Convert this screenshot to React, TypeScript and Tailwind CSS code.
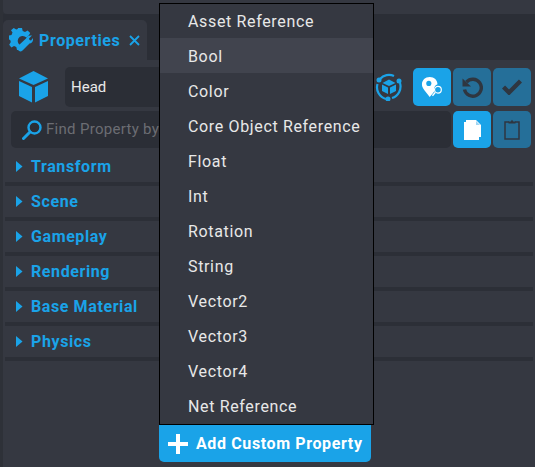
const menuItems = ['Asset Reference', 'Bool', 'Color', 'Core Object Reference', 'Float', 'Int', 'Rotation', 'String', 'Vector2', 'Vector3', 'Vector4', 'Net Reference'];
const sections = ['Transform', 'Scene', 'Gameplay', 'Rendering', 'Base Material', 'Physics'];

const GearIcon = () => (
    <svg width="24" height="25" viewBox="0 0 24 25" className="shrink-0">
        <path d="M9 0h4l.7 3 2.300 1 2.600-1.600 2.600 2.700-1.500 2.300-2.300 2.200a5 5 0 1 0-4.200 8.300l-1.400 1.300-.5 2.800H8l-.7-3-2.300-1-2.600 1.600L.2 16.700 1.800 14 1.200 12 0 11.500V7.500l2.500-.6 1-2.300L2 2.300 4.700 0l2.600 1.500 1.400-.6z" fill="#1aa3e8" />
        <path d="M9.500 17.500 17 10.500c1-2.500 3-3.500 6-3l-3 3 .5 1.500 1.500.5 2-2.500c.5 3-1 5-3.500 5.500L13.500 22.500a2.500 2.500 0 0 1-4-5z" fill="#1aa3e8" />
    </svg>
);

const CubeIcon = () => (
    <svg width="30" height="32" viewBox="0 0 30 32" className="shrink-0">
        <path d="M14.500 0 29 7.500 14.500 14 0 7.500z" fill="#1aa3e8" />
        <path d="M0 10 13 16v15.500L0 25z" fill="#1aa3e8" />
        <path d="M29 10 16 16v15.500L29 25z" fill="#1aa3e8" />
    </svg>
);

const SearchIcon = () => (
    <svg width="20" height="20" viewBox="0 0 20 20" className="shrink-0">
        <circle cx="12.500" cy="7.500" r="6" fill="none" stroke="#1aa3e8" strokeWidth="2.400" />
        <path d="M8 12 1.500 18.500" stroke="#1aa3e8" strokeWidth="3" strokeLinecap="round" />
    </svg>
);

const OrbitIcon = () => (
    <svg width="28" height="28" viewBox="0 0 28 28" className="shrink-0">
        <path d="M5 6a12 12 0 0 1 14-3M25 10a12 12 0 0 1-8 15M11 26A12 12 0 0 1 2.500 11" fill="none" stroke="#1aa3e8" strokeWidth="2.200" />
        <circle cx="4" cy="7" r="2.500" fill="#1aa3e8" />
        <circle cx="24" cy="8" r="2.500" fill="#1aa3e8" />
        <circle cx="13" cy="26" r="2.500" fill="#1aa3e8" />
        <path d="M14 6.500 20.500 10 14 13 7.500 10z" fill="#1aa3e8" />
        <path d="M7 11.500 13 14.500V21L7 18zM21 11.500 15 14.500V21L21 18z" fill="#1aa3e8" />
    </svg>
);

const PinIcon = () => (
    <svg width="22" height="21" viewBox="0 0 24 23">
        <path d="M9.500 0C4.500 0 1 3.500 1 8c0 3 1 4.500 8.500 14 2-2.500 3.500-4.500 5-6.500a6 6 0 0 1 3.500-7.500C18 3.500 14.500 0 9.500 0z" fill="white" />
        <circle cx="8.500" cy="7" r="2.800" fill="#1aa3e8" />
        <circle cx="18.500" cy="14" r="3.700" fill="none" stroke="white" strokeWidth="1.300" />
        <path d="M15.500 17 12.500 20.500" stroke="white" strokeWidth="1.500" />
    </svg>
);

const UndoIcon = () => (
    <svg width="22" height="22" viewBox="0 0 22 22">
        <path d="M5.500 6a8.500 8.500 0 1 1-2 7.500" fill="none" stroke="#2f3640" strokeWidth="3.400" />
        <path d="M1.500 2.500 10 10.500H1.500z" fill="#2f3640" />
    </svg>
);

const CheckIcon = () => (
    <svg width="20" height="16" viewBox="0 0 20 16">
        <path d="M1.500 8 7 13.500 18.500 2" fill="none" stroke="#2f3640" strokeWidth="4.400" />
    </svg>
);

const CopyIcon = () => (
    <svg width="17" height="20" viewBox="0 0 17 20">
        <path d="M0 2h2v15h13v3H0z" fill="white" />
        <path d="M2 0h10l5 5v12H2z" fill="white" />
        <path d="M12 1v4h4z" fill="#9fd6f3" />
    </svg>
);

const ClipboardIcon = () => (
    <svg width="16" height="21" viewBox="0 0 16 21">
        <path d="M5 3H1v17h14V3h-4" fill="none" stroke="#2f3640" strokeWidth="1.500" />
        <path d="M4.500 4.500V2.500h2.200L8 .8l1.300 1.700h2.200v2z" fill="#2f3640" />
    </svg>
);

const IconButton = ({ active, children }: { active?: boolean; children: React.ReactNode }) => (
    <div className={`flex h-[38px] w-[38px] items-center justify-center rounded-[5px] ${active ? 'bg-[#1aa3e8]' : 'bg-[#256f99]'}`}>
        {children}
    </div>
);

const App = () => {
    return (
        <div className="relative flex h-[467px] w-[535px] flex-col overflow-hidden bg-[#2e3138] pl-[3px] font-['Roboto',sans-serif]">
            <div className="h-[14px] rounded-bl-[4px] bg-[#353841]" />
            <div className="h-[46px] bg-[#2b2e36] pt-[6px]">
                <div className="flex h-[40px] w-[144px] items-center rounded-t-[5px] bg-[#353841] pl-[6px]">
                    <GearIcon />
                    <span className="ml-[6px] pt-[2px] text-[16px] font-bold leading-none tracking-[0.6px] text-[#1aa3e8]">Properties</span>
                    <svg width="11" height="11" viewBox="0 0 11 11" className="ml-[9px]">
                        <path d="M1 1l9 9M10 1l-9 9" stroke="#1aa3e8" strokeWidth="1.800" />
                    </svg>
                </div>
            </div>
            <div className="flex-1 bg-[#353841]">
                <div className="mt-[7px] flex h-[40px] items-center pr-[4px]">
                    <div className="ml-[16px]"><CubeIcon /></div>
                    <div className="ml-[16px] flex h-[40px] w-[304px] items-center rounded-[5px] bg-[#2b2e36] pl-[6px] text-[15px] text-[#e8e8e8]">Head</div>
                    <div className="ml-[6px]"><OrbitIcon /></div>
                    <div className="ml-[10px] flex gap-[2px]">
                        <IconButton active><PinIcon /></IconButton>
                        <IconButton><UndoIcon /></IconButton>
                        <IconButton><CheckIcon /></IconButton>
                    </div>
                </div>
                <div className="mt-[4px] flex h-[37px] pl-[8px] pr-[4px]">
                    <div className="flex w-[440px] items-center rounded-[5px] bg-[#2b2e36] pl-[11px] text-[15px] tracking-[0.3px] text-[#6b6d73]">
                        <SearchIcon />
                        <span className="ml-[4px]">Find Property by</span>
                    </div>
                    <div className="ml-[2px] flex gap-[2px]">
                        <div className="flex h-[37px] w-[38px] items-center justify-center rounded-[5px] bg-[#1aa3e8]"><CopyIcon /></div>
                        <div className="flex h-[37px] w-[38px] items-center justify-center rounded-[5px] bg-[#256f99]"><ClipboardIcon /></div>
                    </div>
                </div>
                <div className="mx-[2px] mt-[3px] flex flex-col">
                    {sections.map((s) => (
                        <div key={s} className="flex h-[35px] items-center border-b-[4px] border-[#2c2f37] pl-[11px]">
                            <svg width="7" height="11" viewBox="0 0 7 11"><path d="M0 0l6.500 5.500L0 11z" fill="#1aa3e8" /></svg>
                            <span className="ml-[8px] text-[16px] font-bold tracking-[0.6px] text-[#1aa3e8]">{s}</span>
                        </div>
                    ))}
                </div>
            </div>
            <div className="absolute left-[159px] top-[3px] w-[215px]">
                <div className="border border-black bg-[#353841]">
                    {menuItems.map((m, i) => (
                        <div key={m} className={`flex items-center pl-[28px] text-[16px] tracking-[0.65px] text-[#e8e8e8] ${i === 0 ? 'h-[34px] pt-[1px]' : i === 11 ? 'h-[36px] pt-[1px]' : 'h-[35px] pt-[2px]'} ${i === 1 ? 'bg-[#41444e]' : ''}`}>{m}</div>
                    ))}
                </div>
                <div className="flex h-[37px] w-[212px] items-center rounded-b-[5px] bg-[#1aa3e8] pl-[9px]">
                    <svg width="20" height="20" viewBox="0 0 20 20"><path d="M8 0h4v8h8v4h-8v8H8v-8H0V8h8z" fill="white" /></svg>
                    <span className="ml-[8px] text-[16px] font-bold tracking-[0.62px] text-white">Add Custom Property</span>
                </div>
            </div>
        </div>
    );
};
export default App;
